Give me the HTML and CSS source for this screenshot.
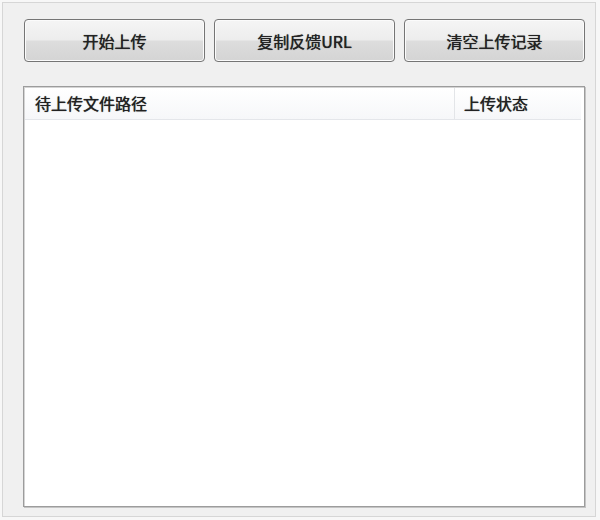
FILE: index.html
```html
<!DOCTYPE html>
<html lang="zh-CN">
<head>
<meta charset="utf-8">
<title>上传</title>
<link rel="stylesheet" href="styles.css">
</head>
<body>
<div class="window">
  <div class="toolbar">
    <button class="btn">开始上传</button>
    <button class="btn">复制反馈URL</button>
    <button class="btn">清空上传记录</button>
  </div>
  <div class="list">
    <div class="list-head">
      <div class="col col-path">待上传文件路径</div>
      <div class="col col-status">上传状态</div>
    </div>
    <div class="list-body"></div>
  </div>
</div>
</body>
</html>
```
FILE: styles.css
```css
* { box-sizing: border-box; }
html, body { margin: 0; padding: 0; }
body {
  width: 600px;
  height: 520px;
  background: #f7f7f7;
  padding: 2px 0 0 2px;
  font-family: "Noto Sans CJK SC", "Noto Sans", "Liberation Sans", sans-serif;
  color: #1e1e1e;
}
.window {
  width: 594px;
  height: 515px;
  border: 1px solid #d6d6d6;
  background: #f0f0f0;
  padding: 16px 10px 0 21px;
  display: flex;
  flex-direction: column;
}
.toolbar {
  display: grid;
  grid-template-columns: 181px 181px 181px;
  column-gap: 9px;
  height: 43px;
}
.btn {
  font-family: inherit;
  font-size: 16px;
  font-weight: 400;
  color: #222;
  border: 1px solid #757575;
  border-radius: 4px;
  background: linear-gradient(#f5f5f5 0%, #ededed 48%, #dddddd 52%, #d4d4d4 100%);
  box-shadow: inset 0 0 0 1px #fbfbfb;
  padding: 0;
  text-shadow: 0 0 1px rgba(0,0,0,0.7), 0 0 0.5px rgba(0,0,0,0.5);
}
.list {
  margin-top: 24px;
  margin-left: -1px;
  width: 562px;
  height: 421px;
  border: 1px solid #9c9c9c;
  box-shadow: 1px 1px 0 #c4c4c4, inset 1px 1px 0 #d4d4d4;
  background: #fff;
  padding: 1px 3px 0 1px;
  display: flex;
  flex-direction: column;
}
.list-head {
  display: flex;
  height: 32px;
  background: linear-gradient(#ffffff, #f6f7f9);
  border-bottom: 1px solid #e4e6ea;
  font-size: 16px;
  font-weight: 400;
  line-height: 31px;
  color: #222;
  text-shadow: 0 0 1px rgba(0,0,0,0.7), 0 0 0.5px rgba(0,0,0,0.5);
}
.col { white-space: nowrap; }
.col-path {
  width: 430px;
  padding-left: 10px;
  border-right: 1px solid #e3e5e8;
}
.col-status {
  flex: 1;
  padding-left: 9px;
}
.list-body { flex: 1; }
```
